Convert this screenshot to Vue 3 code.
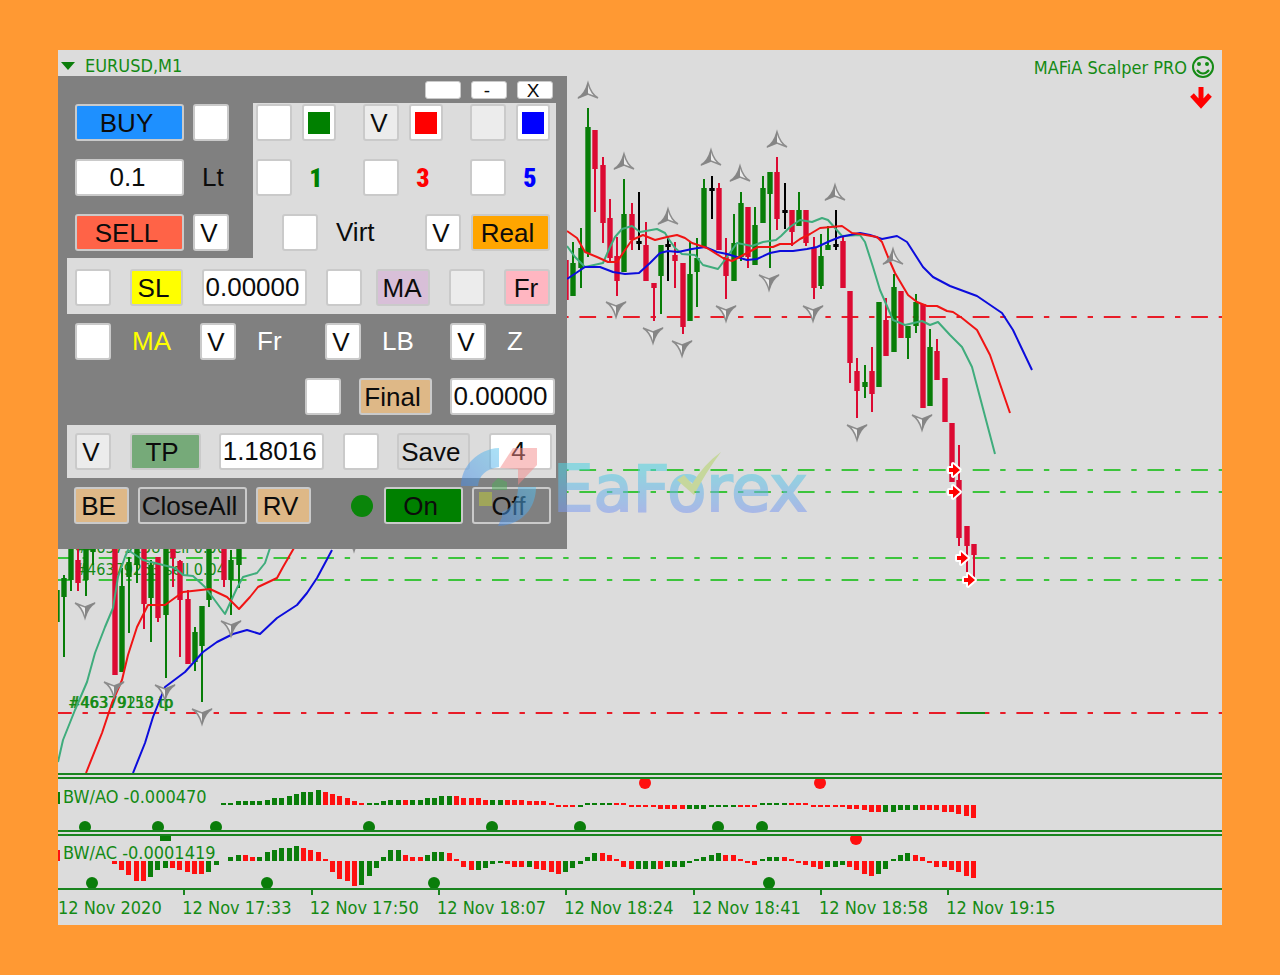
<template>
  <main class="page">
    <section class="terminal">
      <svg class="plot" viewBox="58 50 1164 723" role="img" aria-label="EURUSD M1 price chart">
        <g class="levels">
          <line v-for="y in tpLevels" :key="y" class="level red" x1="55" :y1="y" x2="1222" :y2="y" />
          <line v-for="y in orderLevels" :key="y" class="level green" x1="55" :y1="y" x2="1222" :y2="y" />
          <line class="level-mark" x1="960" y1="713" x2="985" y2="713" />
        </g>

        <g class="order-text">
          <text x="75" y="553">#46379158 sell 0.06</text>
          <text x="75" y="575">#46379263 sell 0.04</text>
          <text x="68" y="708">#46379158 tp</text>
          <text x="69" y="708">#46379213 tp</text>
        </g>

        <g v-for="c in candles" :key="c.i" :class="['candle', c.kind]">
          <line :x1="c.x" :y1="c.high" :x2="c.x" :y2="c.low" />
          <rect :x="c.x - c.half" :y="c.top" :width="c.half * 2" :height="c.height" />
        </g>

        <polyline v-for="(l, n) in averages" :key="n" :class="['average', l.kind]" :points="l.points" />

        <g v-for="(f, n) in fractals" :key="n" :transform="f">
          <path class="fractal-light" d="M0 1 Q3 12 10 16 L0 12 L-10 16 Q-3 12 0 1 Z" />
          <path class="fractal-dark" d="M0 0 Q-3 12 -11 17 L0 12 Z" />
        </g>

        <path
          v-for="(a, n) in fills"
          :key="n"
          class="fill-arrow"
          :transform="`translate(${a[0]} ${a[1]})`"
          d="M-5 -2 H-1 V-6 L6 0 L-1 6 V2 H-5 Z"
        />

        <path class="triangle" d="M61 62 H75 L68 70 Z" />
        <text class="chart-text" x="85" y="72">EURUSD,M1</text>
        <text class="chart-text" x="1187" y="74" text-anchor="end">MAFiA Scalper PRO</text>
        <g class="smile">
          <circle cx="1203" cy="67" r="10" />
          <path d="M1197 70 Q1203 77 1209 70" />
          <circle class="eye" cx="1199" cy="64" r="1" />
          <circle class="eye" cx="1207" cy="64" r="1" />
        </g>
        <path class="trend-arrow" d="M1201 87 V104 M1192 95 L1201 105 L1210 95" />
      </svg>

      <div class="splitter"></div>

      <svg class="plot" viewBox="58 779 1164 51" role="img" aria-label="BW/AO indicator">
        <rect class="up" x="58" y="792" width="2" height="12" />
        <rect v-for="b in aoBars" :key="b.x" :class="b.kind" :x="b.x" :y="b.y" width="5" :height="b.h" />
        <circle v-for="x in [85, 158, 216, 369, 492, 580, 718, 762]" :key="x" class="up" :cx="x" cy="827" r="6" />
        <circle v-for="x in [645, 820]" :key="x" class="down" :cx="x" cy="783" r="6" />
        <text class="chart-text" x="63" y="803">BW/AO -0.000470</text>
      </svg>

      <div class="splitter"></div>

      <svg class="plot" viewBox="58 836 1164 52" role="img" aria-label="BW/AC indicator">
        <rect class="down" x="58" y="850" width="2" height="11" />
        <rect class="up" x="160" y="836" width="11" height="5" />
        <rect v-for="b in acBars" :key="b.x" :class="b.kind" :x="b.x" :y="b.y" width="5" :height="b.h" />
        <circle v-for="x in [92, 267, 434, 769]" :key="x" class="up" :cx="x" cy="883" r="6" />
        <circle class="down" cx="856" cy="839" r="6" />
        <text class="chart-text" x="63" y="859">BW/AC -0.0001419</text>
      </svg>

      <div class="axis">
        <ol class="axis-list">
          <li v-for="t in times" :key="t">{{ t }}</li>
        </ol>
      </div>

      <form class="panel" @submit.prevent>
        <div class="caption">
          <button type="button" aria-label="Move"></button>
          <button type="button" aria-label="Minimize">-</button>
          <button type="button" aria-label="Close">X</button>
        </div>

        <div class="top">
          <div class="trade">
            <div class="row">
              <button type="button" class="btn wide buy">BUY</button>
              <label class="toggle"><input v-model="on.buy" type="checkbox" aria-label="Buy" /><span>{{ mark('buy') }}</span></label>
            </div>
            <div class="row">
              <input v-model="lot" class="field wide" type="text" aria-label="Lot size" />
              <span class="unit">Lt</span>
            </div>
            <div class="row">
              <button type="button" class="btn wide sell">SELL</button>
              <label class="toggle"><input v-model="on.sell" type="checkbox" aria-label="Sell" /><span>{{ mark('sell') }}</span></label>
            </div>
          </div>

          <div class="signals">
            <div class="row triple">
              <div v-for="s in swatches" :key="s.key" class="pair">
                <label :class="['toggle', { pale: s.pale }]"><input v-model="on[s.key]" type="checkbox" :aria-label="s.key" /><span>{{ mark(s.key) }}</span></label>
                <button type="button" class="swatch" :class="s.key" :aria-label="s.key + ' line'"><i></i></button>
              </div>
            </div>
            <div class="row triple">
              <label v-for="s in periods" :key="s.key" class="pair">
                <span class="toggle"><input v-model="on[s.key]" type="checkbox" /><span>{{ mark(s.key) }}</span></span>
                <span class="period" :class="s.tone">{{ s.text }}</span>
              </label>
            </div>
            <div class="row mode">
              <label class="pair virt">
                <span class="toggle"><input v-model="on.virt" type="checkbox" /><span>{{ mark('virt') }}</span></span>
                Virt
              </label>
              <div class="pair">
                <label class="toggle"><input v-model="on.real" type="checkbox" aria-label="Real" /><span>{{ mark('real') }}</span></label>
                <button type="button" class="btn real">Real</button>
              </div>
            </div>
          </div>
        </div>

        <div class="strip stop">
          <div class="group">
            <label class="toggle"><input v-model="on.sl" type="checkbox" aria-label="SL" /><span>{{ mark('sl') }}</span></label>
            <button type="button" class="btn sl">SL</button>
            <input v-model="slPrice" class="field price" type="text" aria-label="Stop loss price" />
            <label class="toggle"><input v-model="on.slMa" type="checkbox" aria-label="MA stop" /><span>{{ mark('slMa') }}</span></label>
          </div>
          <div class="group">
            <button type="button" class="btn ma">MA</button>
            <label class="toggle pale"><input v-model="on.slFr" type="checkbox" aria-label="Fr stop" /><span>{{ mark('slFr') }}</span></label>
            <button type="button" class="btn fr">Fr</button>
          </div>
        </div>

        <div class="filters">
          <label v-for="f in filters" :key="f.key" class="filter" :class="f.key">
            <span class="toggle"><input v-model="on[f.key]" type="checkbox" /><span>{{ mark(f.key) }}</span></span>
            {{ f.text }}
          </label>
        </div>

        <div class="final-row">
          <label class="toggle"><input v-model="on.final" type="checkbox" aria-label="Final" /><span>{{ mark('final') }}</span></label>
          <button type="button" class="btn tan final">Final</button>
          <input v-model="finalPrice" class="field price" type="text" aria-label="Final price" />
        </div>

        <div class="strip profit">
          <label class="toggle pale"><input v-model="on.tp" type="checkbox" aria-label="TP" /><span>{{ mark('tp') }}</span></label>
          <button type="button" class="btn tp">TP</button>
          <input v-model="tpPrice" class="field price" type="text" aria-label="Take profit price" />
          <label class="toggle"><input v-model="on.save" type="checkbox" aria-label="Save" /><span>{{ mark('save') }}</span></label>
          <button type="button" class="btn save">Save</button>
          <input v-model="saveCount" class="field count" type="text" aria-label="Save count" />
        </div>

        <div class="footer">
          <div class="group tight">
            <button type="button" class="btn tan small">BE</button>
            <button type="button" class="btn plain wide">CloseAll</button>
            <button type="button" class="btn tan small">RV</button>
          </div>
          <div class="group tight">
            <span class="lamp"></span>
            <button type="button" class="btn power on">On</button>
            <button type="button" class="btn power plain">Off</button>
          </div>
        </div>
      </form>

      <svg class="watermark" viewBox="450 430 390 110" width="390" height="110" role="img" aria-label="EaForex">
        <defs>
          <linearGradient id="brand" gradientUnits="userSpaceOnUse" x1="0" y1="468" x2="0" y2="512">
            <stop offset="0" stop-color="#4fd2e2" />
            <stop offset="1" stop-color="#7f9bf0" />
          </linearGradient>
          <linearGradient id="crescent" x1="1" y1="0" x2="0" y2="1">
            <stop offset="0" stop-color="#58c4ee" />
            <stop offset="1" stop-color="#4a8be8" />
          </linearGradient>
        </defs>
        <g opacity="0.5">
          <path fill="url(#crescent)" d="M499 448 C478 449 461 466 461 486 H478 C479 475 486 469 499 467 Z" />
          <path fill="#f58a8a" d="M513 448 H537 V465 L518 485 V469 L500 468 Z" />
          <path fill="#4fae5a" d="M498 478 L507 482 V490 H492 V484 Z" />
          <rect fill="#c0cc35" x="479" y="492" width="13" height="14" />
          <path fill="url(#crescent)" d="M518 487 H536 C536 508 522 525 498 526 L502 517 V512 C512 508 518 500 518 487 Z" />
        </g>
        <g opacity="0.55">
          <text class="brand" x="553" y="511" fill="url(#brand)" stroke="url(#brand)">EaForex</text>
          <path fill="#b5d468" d="M677 480 L684 475 L692 484 Q704 464 721 452 Q706 472 694 495 Z" />
        </g>
      </svg>
    </section>
  </main>
</template>

<script setup>
import { reactive, ref } from 'vue'

const on = reactive({
  buy: false, sell: true,
  green: false, red: true, blue: false,
  p1: false, p3: false, p5: false,
  virt: false, real: true,
  sl: false, slMa: false, slFr: false,
  fMa: false, fFr: true, fLb: true, fZ: true,
  final: false, tp: true, save: false
})

const mark = (key) => (on[key] ? 'V' : '')

const lot = ref('0.1')
const slPrice = ref('0.00000')
const finalPrice = ref('0.00000')
const tpPrice = ref('1.18016')
const saveCount = ref('4')

const swatches = [{ key: 'green' }, { key: 'red', pale: true }, { key: 'blue', pale: true }]
const periods = [
  { key: 'p1', text: '1', tone: 'green' },
  { key: 'p3', text: '3', tone: 'red' },
  { key: 'p5', text: '5', tone: 'blue' }
]
const filters = [
  { key: 'fMa', text: 'MA' },
  { key: 'fFr', text: 'Fr' },
  { key: 'fLb', text: 'LB' },
  { key: 'fZ', text: 'Z' }
]

const times = [
  '12 Nov 2020', '12 Nov 17:33', '12 Nov 17:50', '12 Nov 18:07',
  '12 Nov 18:24', '12 Nov 18:41', '12 Nov 18:58', '12 Nov 19:15'
]

const tpLevels = [317, 713]
const orderLevels = [470, 492, 558, 580]
const fills = [[954, 470], [954, 492], [962, 558], [969, 580]]

// bar index -> x, bar 0 is the tall green one right of the panel
const barX = (i) => Math.round(588 + i * 7.28)

// index, kind (g up, r down, k doji), high, body top, body bottom, low
const bars = [
  [-73, 'g', 590, 590, 622, 622], [-72, 'g', 575, 578, 597, 657], [-71, 'g', 540, 540, 580, 591],
  [-70, 'r', 540, 560, 583, 591], [-69, 'g', 540, 540, 580, 596], [-68, 'g', 540, 540, 552, 565],
  [-65, 'r', 540, 540, 675, 675], [-64, 'g', 568, 586, 672, 672], [-63, 'g', 557, 562, 577, 633],
  [-62, 'g', 540, 540, 565, 583], [-61, 'r', 540, 540, 604, 629], [-60, 'g', 560, 565, 598, 642],
  [-59, 'r', 557, 557, 618, 622], [-58, 'g', 540, 540, 615, 678], [-57, 'r', 540, 540, 558, 587],
  [-56, 'r', 560, 561, 600, 657], [-55, 'r', 590, 599, 664, 664], [-54, 'g', 627, 632, 662, 671],
  [-53, 'g', 606, 606, 646, 702], [-52, 'g', 540, 540, 600, 607], [-50, 'r', 540, 540, 580, 587],
  [-49, 'g', 550, 560, 580, 615], [-48, 'g', 540, 540, 565, 588],
  [-3, 'r', 260, 260, 300, 300], [-2, 'g', 242, 263, 296, 296], [-1, 'g', 228, 248, 268, 288],
  [0, 'g', 108, 127, 253, 257], [1, 'r', 130, 130, 169, 212], [2, 'r', 157, 165, 223, 243],
  [3, 'r', 199, 218, 258, 261], [4, 'r', 237, 256, 281, 296], [5, 'g', 179, 214, 272, 272],
  [6, 'r', 203, 214, 240, 250], [7, 'k', 192, 241, 244, 250], [8, 'r', 222, 245, 281, 281],
  [9, 'r', 283, 283, 288, 321], [10, 'g', 245, 245, 276, 314], [11, 'k', 237, 244, 247, 281],
  [12, 'r', 242, 255, 261, 288], [13, 'r', 263, 263, 327, 334], [14, 'g', 242, 274, 321, 321],
  [15, 'g', 238, 258, 272, 307], [16, 'g', 179, 188, 248, 248], [17, 'k', 176, 188, 191, 219],
  [18, 'r', 183, 188, 250, 250], [19, 'r', 238, 257, 276, 299], [20, 'g', 214, 243, 281, 281],
  [21, 'g', 192, 203, 257, 261], [22, 'r', 207, 207, 257, 268], [23, 'g', 207, 225, 265, 265],
  [24, 'g', 176, 188, 223, 223], [25, 'g', 172, 172, 194, 268], [26, 'r', 157, 172, 219, 230],
  [27, 'k', 183, 210, 213, 229], [28, 'r', 210, 210, 232, 246], [29, 'g', 192, 210, 226, 226],
  [30, 'r', 210, 210, 243, 246], [31, 'r', 237, 247, 288, 299], [32, 'g', 234, 256, 286, 289],
  [33, 'g', 226, 245, 250, 250], [34, 'k', 210, 244, 247, 250], [35, 'r', 237, 241, 288, 288],
  [36, 'r', 291, 291, 363, 383], [37, 'r', 358, 371, 391, 418], [38, 'g', 365, 382, 387, 398],
  [39, 'r', 347, 371, 394, 412], [40, 'g', 302, 302, 387, 387], [41, 'r', 298, 320, 356, 356],
  [42, 'g', 274, 287, 352, 352], [43, 'r', 291, 291, 338, 338], [44, 'g', 326, 326, 338, 359],
  [45, 'g', 294, 302, 326, 333], [46, 'r', 304, 304, 408, 408], [47, 'g', 329, 347, 406, 406],
  [48, 'r', 339, 351, 380, 380], [49, 'r', 378, 378, 422, 422], [50, 'r', 423, 423, 482, 482],
  [51, 'r', 445, 480, 538, 546], [52, 'r', 526, 526, 546, 572], [53, 'r', 544, 544, 555, 583]
]

const candles = bars.map(([i, kind, high, top, bottom, low]) => ({
  i, kind, high, low, top,
  x: barX(i),
  half: 2.7,
  height: bottom - top
}))

const averages = [
  {
    kind: 'teal',
    points: '58,762 63,740 75,710 87,682 95,653 105,627 113,608 118,577 125,557 128,550 143,560 175,568 183,575 193,576 205,587 225,614 237,588 243,577 257,573 265,563 271,545'
  },
  {
    kind: 'teal',
    points: '567,246 575,257 585,267 603,263 610,247 615,237 622,229 632,226 640,232 657,229 665,233 668,238 675,248 682,254 695,255 703,265 718,269 727,257 737,243 752,246 763,242 776,240 781,236 790,227 800,220 812,222 822,218 828,220 835,228 842,236 860,235 865,242 873,267 880,290 893,320 905,325 922,321 930,325 938,322 950,335 962,347 972,367 995,454'
  },
  {
    kind: 'blue',
    points: '133,773 145,743 153,717 165,687 185,672 203,652 217,642 233,634 247,630 260,634 277,618 297,605 307,593 317,578 332,550'
  },
  {
    kind: 'blue',
    points: '567,279 585,267 600,267 613,272 625,274 639,273 650,263 660,253 668,251 678,252 692,249 705,247 717,252 727,254 747,260 757,259 770,253 780,251 793,251 807,249 817,247 830,241 840,237 850,235 860,233 870,235 882,239 897,236 907,242 923,267 933,277 950,286 977,296 1002,313 1013,330 1032,370'
  },
  {
    kind: 'red',
    points: '86,773 102,733 112,703 122,680 128,655 137,627 148,605 165,605 183,592 210,589 227,597 239,609 250,597 258,587 277,578 283,567 294,548'
  },
  {
    kind: 'red',
    points: '567,231 577,238 585,252 597,257 608,262 617,262 625,250 632,240 643,235 655,240 667,237 677,235 685,238 692,243 707,248 723,258 732,261 747,253 758,247 773,247 780,244 793,244 800,239 810,234 820,228 842,226 852,233 860,234 877,237 882,242 888,257 895,273 908,295 917,302 927,306 937,306 947,311 953,312 962,318 977,330 990,355 1010,413'
  }
]

const peaks = [[588, 82], [624, 153], [668, 208], [711, 149], [740, 165], [777, 131], [835, 184], [893, 248]]
const troughs = [
  [616, 301], [653, 327], [682, 340], [726, 305], [769, 274], [813, 305], [857, 424], [922, 414],
  [85, 602], [114, 681], [165, 684], [202, 708], [231, 620], [354, 535]
]
const fractals = [
  ...peaks.map(([x, y]) => `translate(${x} ${y})`),
  ...troughs.map(([x, y]) => `translate(${x} ${y + 17}) rotate(180)`)
]

// "g5" is a green bar 5px above zero, "r-3" a red one 3px below
const histogram = (start, zero, text) =>
  text.split(' ').filter(Boolean).map((token, n) => {
    const value = Number(token.slice(1))
    return {
      kind: token[0] === 'g' ? 'up' : 'down',
      x: barX(start + n) - 3,
      y: value > 0 ? zero - value : zero,
      h: Math.abs(value)
    }
  })

const aoBars = histogram(-50, 805,
  'g2 g2 g4 g4 g4 g4 g5 g7 g7 g9 g11 g13 g13 g15 r13 r11 r9 r7 r4 r2 g2 g2 g4 g5 g5 r5 g5 g5 g7 g7 ' +
  'g9 g9 r9 r7 r7 r7 r5 g5 g5 r5 r5 r5 r4 r4 r4 r2 r-2 r-2 r-2 g-2 g2 g2 g2 g2 r2 r2 r-2 r-2 r-2 r-2 ' +
  'r-4 r-4 r-4 r-4 g-4 g-4 g-4 g-2 g-2 g-2 g-2 r-2 r-2 r-2 g2 g2 g2 g2 r2 r2 r2 r-2 r-2 r-2 r-2 r-2 ' +
  'r-4 r-4 r-5 r-7 r-7 g-7 g-7 g-5 g-5 g-5 r-5 r-5 r-5 r-7 r-7 r-9 r-11 r-13')

const acBars = histogram(-65, 861,
  'r-3 r-9 r-14 r-20 r-20 g-16 g-9 g-7 r-7 r-9 r-11 r-13 r-13 g-11 g-4 g0 g4 g6 r6 r4 g4 g9 g11 g13 g13 g15 ' +
  'r13 r11 r9 r2 r-11 r-18 r-20 r-25 g-24 g-15 g-7 g4 g11 g11 r6 r4 r4 g6 g9 g9 r8 r2 r-6 r-9 g-9 g-7 ' +
  'g-3 g-2 r-3 r-6 r-6 g-6 r-8 r-9 r-11 r-13 g-11 g-7 g-3 g4 g8 r8 r6 r2 r-6 r-8 g-8 g-8 g-8 r-8 g-6 ' +
  'g-6 g-6 g-2 g2 g4 g6 g8 r6 r6 r2 r-2 r-4 g2 g4 g4 r4 r2 r-2 r-4 r-6 r-8 g-6 g-6 g-4 r-6 r-9 r-13 ' +
  'r-15 g-13 g-8 g2 g6 g8 r6 r4 r-2 r-6 r-6 r-9 r-11 r-15 r-17')
</script>

<style>
body {
  margin: 0;
  background: #ff9933;
}
</style>

<style scoped>
.page {
  padding: 50px 58px;
}

.terminal {
  position: relative;
  overflow: hidden;
  background: #dcdcdc;
  color: #148a14;
}

.plot {
  display: block;
  width: 100%;
}

.splitter {
  height: 2px;
  border-top: 2px solid #1a841f;
  border-bottom: 2px solid #1a841f;
}

/* Price chart */
.chart-text {
  font: 18px 'DejaVu Sans Condensed', 'DejaVu Sans', sans-serif;
  fill: #148a14;
}

.order-text {
  font: 16px 'DejaVu Sans Condensed', 'DejaVu Sans', sans-serif;
  fill: #148a14;
}

.level {
  stroke-width: 2;
  stroke-dasharray: 16.7 10.8 5.4 10.8;
}

.level.red {
  stroke: #e81c28;
}

.level.green {
  stroke: #3cc43c;
}

.level-mark {
  stroke: #148a14;
  stroke-width: 2;
}

.candle line {
  stroke-width: 2;
}

.candle.g {
  fill: #087d08;
  stroke: #087d08;
}

.candle.r {
  fill: #dc0a32;
  stroke: #dc0a32;
}

.candle.k {
  fill: #000;
  stroke: #000;
}

.candle rect {
  stroke: none;
}

.average {
  fill: none;
  stroke-width: 2;
  stroke-linejoin: round;
}

.average.teal {
  stroke: #3fac7c;
}

.average.red {
  stroke: #f01414;
}

.average.blue {
  stroke: #0c0cdc;
}

.fractal-dark {
  fill: #858585;
}

.fractal-light {
  fill: #ececec;
  stroke: #8c8c8c;
  stroke-width: 1.5;
}

.fill-arrow {
  fill: #ff0000;
  stroke: #fff;
  stroke-width: 4;
  stroke-linejoin: round;
  paint-order: stroke;
}

.triangle {
  fill: #0b7d0b;
}

.smile {
  fill: none;
  stroke: #148a14;
  stroke-width: 2;
}

.smile .eye {
  fill: #148a14;
}

.trend-arrow {
  fill: none;
  stroke: #ff0000;
  stroke-width: 5;
}

.up {
  fill: #0a7d0a;
}

.down {
  fill: #ff1010;
}

/* Time axis */
.axis {
  border-top: 2px solid #1a841f;
}

.axis-list {
  display: grid;
  grid-template-columns: repeat(8, 127fr) 148fr;
  margin: 0 0 0 -3px;
  padding: 0;
  list-style: none;
  font: 18px/35px 'DejaVu Sans Condensed', 'DejaVu Sans', sans-serif;
}

.axis-list li {
  position: relative;
  white-space: nowrap;
}

.axis-list li:first-child {
  padding-left: 3px;
}

.axis-list li::before {
  content: '';
  position: absolute;
  top: 0;
  left: 1px;
  width: 2px;
  height: 5px;
  background: #1a841f;
}

/* Control panel */
.panel {
  position: absolute;
  top: 26px;
  left: 0;
  box-sizing: border-box;
  width: 509px;
  padding-bottom: 25px;
  background: #808080;
  color: #0c0c0c;
  font: 26px 'Liberation Sans', Arial, sans-serif;
}

.panel button,
.panel .field,
.panel .toggle {
  box-sizing: border-box;
  height: 37px;
  margin: 0;
  border: 2px solid #cacaca;
  border-radius: 3px;
  color: #0c0c0c;
  font: inherit;
  line-height: 34px;
  text-align: center;
}

.panel .btn {
  padding: 0 6px 0 0;
}

.panel .field {
  padding: 0 4px 0 0;
  background: #fff;
}

.panel .toggle {
  position: relative;
  flex: none;
  width: 36px;
  padding-right: 4px;
  background: #fff;
}

.toggle input {
  position: absolute;
  inset: 0;
  width: 100%;
  height: 100%;
  margin: 0;
  opacity: 0;
}

.panel .toggle.pale {
  background: #ececec;
}

.caption {
  display: flex;
  justify-content: flex-end;
  gap: 10px;
  padding: 5px 14px 4px 0;
}

.panel .caption button {
  width: 36px;
  height: 18px;
  padding: 0 4px 0 0;
  border-width: 1px;
  background: #fff;
  font-size: 19px;
  line-height: 18px;
}

.top {
  display: flex;
}

.trade,
.signals {
  display: flex;
  flex-direction: column;
  gap: 18px;
  padding: 1px 0 7px;
}

.trade {
  width: 178px;
  padding-left: 17px;
}

.row,
.group,
.pair {
  display: flex;
  align-items: center;
}

.trade .row {
  gap: 9px;
}

.unit {
  padding-left: 9px;
}

.wide {
  width: 109px;
}

.panel .buy {
  background: #1e90ff;
}

.panel .sell {
  background: #ff6347;
}

.signals {
  box-sizing: border-box;
  width: 303px;
  padding-left: 3px;
  background: #dcdcdc;
}

.triple {
  gap: 27px;
}

.pair {
  gap: 10px;
}

.panel .swatch {
  display: flex;
  width: 34px;
  padding: 4px;
  background: #fff;
}

.swatch i {
  flex: 1;
  align-self: center;
  height: 22px;
}

.swatch.green i {
  background: #008000;
}

.swatch.red i {
  background: #ff0000;
}

.swatch.blue i {
  background: #0000ff;
}

.period {
  width: 28px;
  padding-right: 6px;
  font-family: 'Liberation Sans Narrow', 'Roboto Condensed', 'Roboto', sans-serif;
  font-weight: 900;
  text-align: center;
}

.period.green {
  color: #008000;
}

.period.red {
  color: #ff0000;
}

.period.blue {
  color: #0000ff;
}

.mode {
  justify-content: space-between;
  padding: 0 6px 0 26px;
}

.virt {
  gap: 18px;
}

.panel .real {
  width: 79px;
  background: #ffa500;
}

.strip {
  display: flex;
  justify-content: space-between;
  margin: 0 11px 0 9px;
  background: #dcdcdc;
}

.stop {
  padding: 11px 6px 8px 8px;
}

.group {
  gap: 19px;
}

.panel .sl {
  width: 53px;
  background: #ffff00;
}

.price {
  width: 105px;
}

.panel .ma {
  width: 54px;
  padding-right: 2px;
  background: #d8bfd8;
}

.panel .fr {
  width: 46px;
  padding-right: 2px;
  background: #ffb6c1;
}

.filters {
  display: grid;
  grid-template-columns: repeat(4, 125px);
  margin: 9px 0 18px;
  padding-left: 17px;
}

.filter {
  display: flex;
  align-items: center;
  gap: 21px;
  color: #fff;
}

.filter.fMa {
  color: #ffff00;
}

.final-row {
  display: flex;
  justify-content: flex-end;
  gap: 18px;
  padding: 0 12px 10px 0;
}

.panel .tan {
  background: #deb887;
}

.final {
  width: 73px;
}

.profit {
  padding: 8px 4px 8px 8px;
}

.panel .tp {
  width: 71px;
  background: #76aa79;
}

.panel .save {
  width: 73px;
  background: #d9d9d9;
}

.count {
  width: 63px;
}

.footer {
  display: flex;
  justify-content: space-between;
  padding: 9px 16px 0 16px;
}

.tight {
  gap: 9px;
}

.small {
  width: 55px;
}

.panel .plain {
  background: #808080;
}

.lamp {
  width: 22px;
  height: 22px;
  margin-right: 2px;
  border-radius: 50%;
  background: #0a850a;
}

.power {
  width: 79px;
}

.panel .on {
  background: #008000;
}

/* Brand overlay */
.watermark {
  position: absolute;
  top: 380px;
  left: 392px;
  pointer-events: none;
}

.brand {
  font: 64px 'DejaVu Sans', sans-serif;
  stroke-width: 2;
}
</style>
